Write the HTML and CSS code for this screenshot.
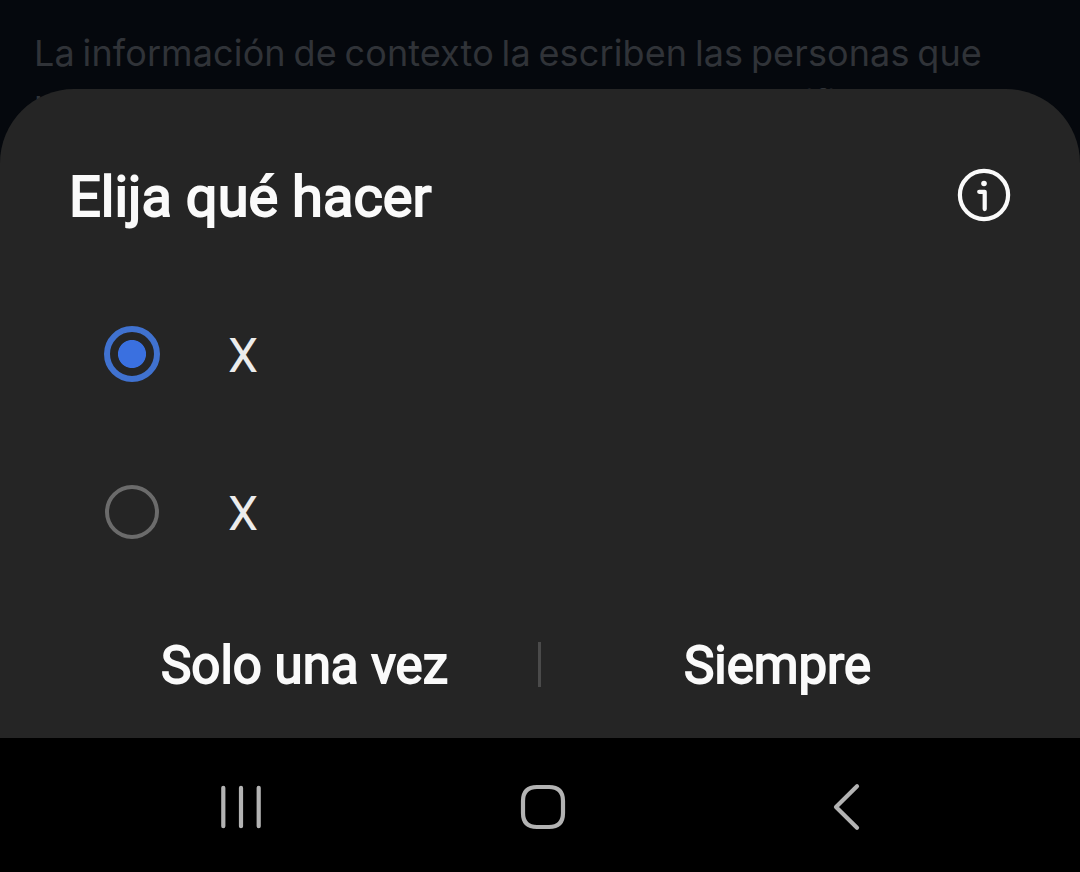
FILE: index.html
```html
<!DOCTYPE html>
<html lang="es">
<head>
<meta charset="utf-8">
<title>Elija qué hacer</title>
<link rel="stylesheet" href="styles.css">
</head>
<body>
<div class="screen">
  <div class="context">
    <div class="context-line">La información de contexto la escriben las personas que</div>
    <div class="context-line context-next">usan X y aparece cuando otras personas la califican</div>
  </div>
  <main class="sheet">
    <header class="head">
      <h1 class="title">Elija qué hacer</h1>
      <svg class="info" viewBox="0 0 54 54" fill="none" stroke="#fafafa" stroke-linecap="round" stroke-linejoin="round">
        <circle cx="27" cy="27" r="24.1" stroke-width="4.2"/>
        <circle cx="27" cy="15.5" r="2.8" fill="#fafafa" stroke="none"/>
        <path d="M22.2 23.8h5.5v17.3" stroke-width="4.2"/>
      </svg>
    </header>
    <div class="options">
      <label class="option"><span class="radio radio-on"></span><span class="name">X</span></label>
      <label class="option"><span class="radio"></span><span class="name">X</span></label>
    </div>
    <div class="actions">
      <div class="action once">Solo una vez</div>
      <div class="divider"></div>
      <div class="action always">Siempre</div>
    </div>
  </main>
  <nav class="nav">
    <svg class="nav-icons" viewBox="0 0 1080 134" fill="none" stroke="#b3b3b3" stroke-width="4.2" stroke-linecap="round" stroke-linejoin="round">
      <path d="M223.3 49.8v38.4M241 49.8v38.4M258.7 49.8v38.4"/>
      <path d="M537 49h12c9.500 0 14 4.500 14 14v12c0 9.500-4.500 14-14 14h-12c-9.500 0-14-4.500-14-14v-12c0-9.500 4.500-14 14-14z"/>
      <path d="M857 48.300l-21 20.700 21 20.700"/>
    </svg>
  </nav>
</div>
</body>
</html>
```
FILE: styles.css
```css
* { box-sizing: border-box; }
body { margin: 0; background: #000; }
.screen {
  width: 1080px;
  height: 872px;
  display: flex;
  flex-direction: column;
  overflow: hidden;
  background: #05080d;
  font-family: Roboto, "Liberation Sans", sans-serif;
}
.context {
  height: 89px;
  flex: none;
  padding: 29px 0 0 34px;
  color: #303338;
  font-family: Inter, "Liberation Sans", sans-serif;
  font-size: 36px;
  line-height: 49.5px;
  letter-spacing: 0.12px;
  word-spacing: -2.5px;
  white-space: nowrap;
}
.context-next { letter-spacing: -0.1px; }
.sheet {
  position: relative;
  height: 649px;
  flex: none;
  display: flex;
  flex-direction: column;
  padding-top: 63px;
  border-radius: 74px 74px 0 0;
  background: #252525;
}
.head {
  height: 86px;
  display: flex;
  justify-content: space-between;
  align-items: center;
  padding: 0 69px;
}
.title {
  margin: 0;
  padding-top: 4px;
  font-size: 56px;
  font-weight: 400;
  line-height: 82px;
  color: #fafafa;
  -webkit-text-stroke: 1.9px #fafafa;
}
.info { width: 54px; height: 54px; }
.options { padding: 37px 0 0 104px; }
.option { height: 158px; display: flex; align-items: center; }
.radio {
  width: 54px;
  height: 54px;
  margin: 0 69px 0 1px;
  border: 4px solid #6b6b6b;
  border-radius: 50%;
}
.radio-on {
  width: 56px;
  height: 56px;
  margin: 0 68px 0 0;
  border: 6px solid #4072d0;
  background: radial-gradient(circle, #3a70e0 13.6px, transparent 14.4px);
}
.name { padding-top: 4px; font-size: 48px; line-height: 56px; color: #ececec; }
.actions { display: flex; align-items: center; height: 60px; margin-top: 45px; }
.action {
  width: 538px;
  font-size: 51px;
  line-height: 60px;
  text-align: center;
  color: #fafafa;
  -webkit-text-stroke: 1.8px #fafafa;
}
.once { padding-left: 71px; }
.always { padding-right: 65px; }
.divider { width: 3px; height: 45px; margin-bottom: 4px; background: #4a4a4a; }
.nav { height: 134px; background: #000; }
.nav-icons { display: block; width: 1080px; height: 134px; }
```
